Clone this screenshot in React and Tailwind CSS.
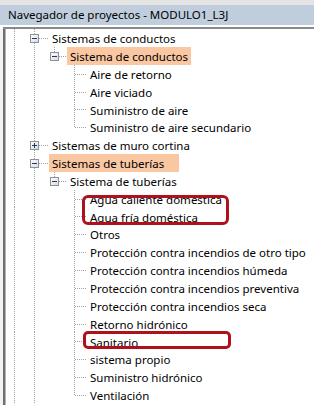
import React from "react";

const ROW_H = 17.85;
const OFF = 6; // tree column starts at page x=6

const L3 = (t, extra = {}) => ({ t, L: 3, full: [14, 34, 74], ...extra });

const rows = [
  { t: "Sistemas de conductos", L: 1, box: "-", full: [14, 34], down: 54 },
  { t: "Sistema de conductos", L: 2, box: "-", hl: true, full: [14, 34], up: 54, down: 74 },
  L3("Aire de retorno"),
  L3("Aire viciado"),
  L3("Suministro de aire"),
  { t: "Suministro de aire secundario", L: 3, full: [14, 34], up: 74 },
  { t: "Sistemas de muro cortina", L: 1, box: "+", full: [14, 34] },
  { t: "Sistemas de tuberías", L: 1, box: "-", hl: true, wide: true, full: [14, 34], down: 54 },
  { t: "Sistema de tuberías", L: 2, box: "-", full: [14, 34], up: 54, down: 74 },
  L3("Agua caliente doméstica"),
  L3("Agua fría doméstica"),
  L3("Otros"),
  L3("Protección contra incendios de otro tipo"),
  L3("Protección contra incendios húmeda"),
  L3("Protección contra incendios preventiva"),
  L3("Protección contra incendios seca"),
  L3("Retorno hidrónico"),
  L3("Sanitario"),
  L3("sistema propio"),
  L3("Suministro hidrónico"),
  { t: "Ventilación", L: 3, full: [14, 34], up: 74 },
];

const labelStart = { 1: 49, 2: 67, 3: 87 };
const DOT = "#a3a3a3";

function Box({ cx, cy, plus }) {
  const x = cx - OFF;
  return (
    <g shapeRendering="crispEdges">
      <rect x={x - 3.5} y={cy - 3.5} width={8} height={8} fill="url(#boxg)" stroke="#8f9297" strokeWidth="1" />
      <line x1={x - 2} x2={x + 3} y1={cy + 0.5} y2={cy + 0.5} stroke="#23385a" strokeWidth="1" />
      {plus && <line x1={x + 0.5} x2={x + 0.5} y1={cy - 2} y2={cy + 3} stroke="#23385a" strokeWidth="1" />}
    </g>
  );
}

function Row({ r }) {
  const ls = labelStart[r.L];
  const w = ls - OFF;
  const cy = 9;
  const cx = 14 + 20 * r.L;
  const hStart = r.box ? cx + 5 : cx + 1;
  return (
    <div className="flex items-stretch" style={{ height: ROW_H }}>
      <svg width={w} height={ROW_H} className="shrink-0 block">
        <defs>
          <linearGradient id="boxg" x1="0" y1="0" x2="1" y2="1">
            <stop offset="0" stopColor="#ffffff" />
            <stop offset="1" stopColor="#d5d9e0" />
          </linearGradient>
        </defs>
        {r.full.map((x) => (
          <line key={x} x1={x - OFF + 0.5} x2={x - OFF + 0.5} y1={0} y2={ROW_H} stroke={DOT} strokeWidth="1" strokeDasharray="1 1" shapeRendering="crispEdges" />
        ))}
        {r.up && (
          <line x1={r.up - OFF + 0.5} x2={r.up - OFF + 0.5} y1={0} y2={cy + 1} stroke={DOT} strokeWidth="1" strokeDasharray="1 1" shapeRendering="crispEdges" />
        )}
        {r.down && (
          <line x1={r.down - OFF + 0.5} x2={r.down - OFF + 0.5} y1={cy + 1} y2={ROW_H} stroke={DOT} strokeWidth="1" strokeDasharray="1 1" shapeRendering="crispEdges" />
        )}
        <line x1={hStart - OFF} x2={w - 1} y1={cy + 0.5} y2={cy + 0.5} stroke={DOT} strokeWidth="1" strokeDasharray="1 1" shapeRendering="crispEdges" />
        {r.box && <Box cx={cx} cy={cy} plus={r.box === "+"} />}
      </svg>
      <span
        className={
          "flex items-center pl-[3px] pt-[2px] whitespace-nowrap text-[11.5px] text-black leading-none " +
          (r.wide ? "pr-[15px] " : "pr-[3px] ") +
          (r.hl ? "bg-[#f9c7a2]" : "")
        }
      >
        {r.t}
      </span>
    </div>
  );
}

export default function App() {
  return (
    <div
      className="relative w-[314px] h-[409px] overflow-hidden bg-white"
      style={{ fontFamily: '"Segoe UI", "Noto Sans", "Open Sans", sans-serif' }}
    >
      <div className="h-[5px] bg-[#e4e4e4]" />
      <div className="h-[20px] bg-[#bfcddc] flex items-center pl-[8px] text-[11.5px] text-black whitespace-nowrap">
        Navegador de proyectos - MODULO1_L3J
      </div>
      <div className="h-[2px] bg-white" />
      <div className="flex h-[2px]">
        <div className="w-[3px] bg-white" />
        <div className="flex-1 bg-[#8a8a8a]" />
      </div>
      <div className="flex">
        <div className="flex w-[6px] shrink-0 h-[376px]">
          <div className="w-[3px] bg-[#f3f3f3]" />
          <div className="w-[2px] bg-[#6f6f6f]" />
          <div className="w-[1px] bg-[#b4b4b4]" />
        </div>
        <div className="flex flex-col">
          {rows.map((r, i) => (
            <Row key={i} r={r} />
          ))}
        </div>
      </div>
      <div className="absolute left-[82px] top-[195px] w-[147px] h-[30px] rounded-[6px] border-[3px] border-[#b0101c]" />
      <div className="absolute left-[83px] top-[331px] w-[148px] h-[18px] rounded-[5px] border-[3px] border-[#b0101c]" />
    </div>
  );
}
